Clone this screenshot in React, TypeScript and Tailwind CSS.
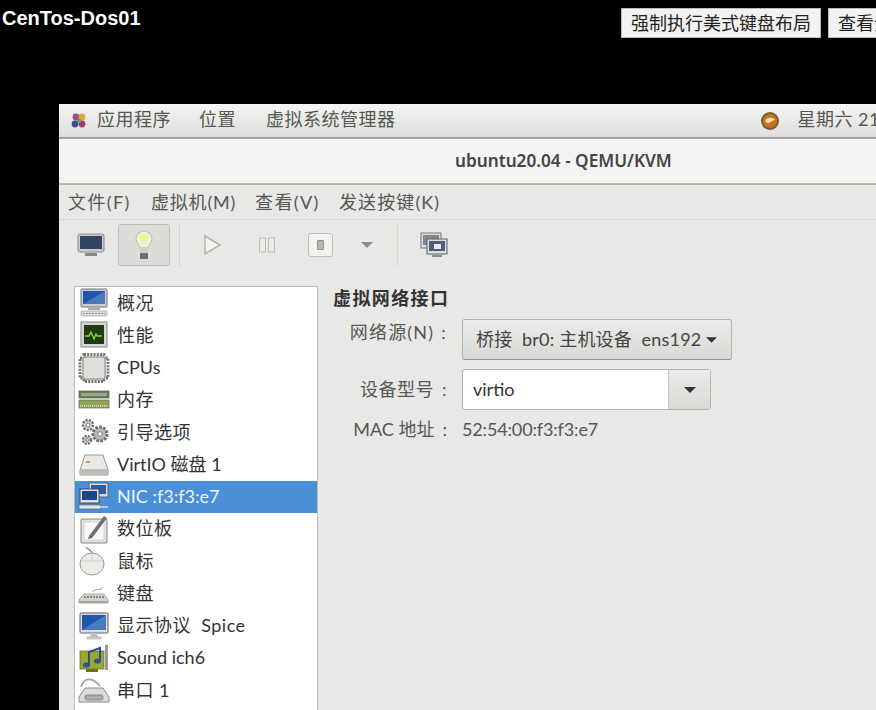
import React from "react";

const Monitor = () => (
  <svg width="32" height="30" viewBox="0 0 32 30">
    <rect x="3" y="1" width="26" height="18" rx="1" fill="#c9ced3" stroke="#6d7378" />
    <rect x="5" y="3" width="22" height="13" fill="#1f56ad" />
    <path d="M5 16 L27 3 V16Z" fill="#6f97c9" opacity=".55" />
    <rect x="10" y="20" width="12" height="2" fill="#a9aca9" />
    <rect x="3" y="23" width="26" height="5" rx="1" fill="#dcdeda" stroke="#9a9d9a" strokeWidth=".7" />
    <path d="M5 25.5h22" stroke="#8f928f" strokeWidth="1" strokeDasharray="2 1" />
  </svg>
);
const Perf = () => (
  <svg width="32" height="30" viewBox="0 0 32 30">
    <rect x="3" y="2" width="26" height="25" fill="#d5d7d3" stroke="#858a85" />
    <rect x="6" y="5" width="20" height="19" fill="#1f3a0f" />
    <path d="M7 16h4l2-4 3 7 2-5 1 2h5" stroke="#8fdc2a" fill="none" strokeWidth="1.3" />
  </svg>
);
const Cpu = () => (
  <svg width="32" height="30" viewBox="0 0 32 30">
    <rect x="2" y="5" width="28" height="20" fill="none" stroke="#747470" strokeWidth="3" strokeDasharray="2 1.2" />
    <rect x="6" y="1.5" width="20" height="27" fill="none" stroke="#747470" strokeWidth="3" strokeDasharray="2 1.2" />
    <rect x="5" y="4" width="22" height="22" rx="2" fill="#dededb" stroke="#8a8a86" />
  </svg>
);
const Ram = () => (
  <svg width="32" height="30" viewBox="0 0 32 30">
    <rect x="1" y="6" width="30" height="7" fill="#6b7d56" stroke="#4d5d3d" strokeWidth=".7" />
    <rect x="3" y="8" width="26" height="3" fill="#9aa58c" />
    <rect x="1" y="15" width="30" height="8" fill="#8fa35e" stroke="#5b6e3a" strokeWidth=".7" />
    <path d="M2 21h28" stroke="#d6d29a" strokeWidth="2" strokeDasharray="1 1" />
  </svg>
);
const Gears = () => (
  <svg width="32" height="30" viewBox="0 0 32 30">
    <circle cx="10" cy="8" r="5" fill="#d9d9d6" stroke="#6f6f68" strokeWidth="2.4" strokeDasharray="2.2 1.2" />
    <circle cx="10" cy="8" r="2" fill="#fff" stroke="#77776f" />
    <circle cx="22" cy="17" r="7" fill="#bdbdb8" stroke="#6f6f68" strokeWidth="3" strokeDasharray="2.6 1.4" />
    <circle cx="22" cy="17" r="2.4" fill="#fff" stroke="#77776f" />
    <circle cx="9" cy="23" r="4" fill="#d9d9d6" stroke="#6f6f68" strokeWidth="2.4" strokeDasharray="2 1.2" />
    <circle cx="9" cy="23" r="1.4" fill="#fff" stroke="#77776f" />
  </svg>
);
const Disk = () => (
  <svg width="32" height="30" viewBox="0 0 32 30">
    <path d="M7 6h18l5 15v5H2v-5Z" fill="#e9e9e6" stroke="#96968f" />
    <rect x="2.5" y="20" width="27" height="6" fill="#bcbcb7" />
    <rect x="8" y="12" width="4" height="2" fill="#e08a5c" />
  </svg>
);
const Nic = () => (
  <svg width="32" height="30" viewBox="0 0 32 30">
    <rect x="11" y="1" width="19" height="14" fill="#d8dde2" stroke="#5b6672" />
    <rect x="13" y="3" width="15" height="9" fill="#2d5da8" />
    <rect x="2" y="7" width="19" height="14" fill="#dfe3e6" stroke="#3f4954" />
    <rect x="4" y="9" width="15" height="9" fill="#1a4690" />
    <rect x="1" y="23" width="22" height="4" fill="#e6e6e2" stroke="#5d6367" strokeWidth=".7" />
    <path d="M23 25h7" stroke="#dfe3e6" strokeWidth="1.5" />
  </svg>
);
const Tablet = () => (
  <svg width="32" height="30" viewBox="0 0 32 30">
    <rect x="3" y="5" width="26" height="24" rx="1" fill="#e3e3e0" stroke="#85857f" />
    <rect x="6" y="8" width="20" height="18" fill="#f8f8f6" stroke="#c4c4c0" strokeWidth=".6" />
    <path d="M11 22 L26 2 L29 4 L14 24 L10 25Z" fill="#6f6f72" />
  </svg>
);
const Mouse = () => (
  <svg width="32" height="30" viewBox="0 0 32 30">
    <path d="M14 7 C13 3 8 3 8 1" fill="none" stroke="#6d8fb8" strokeWidth="1.4" />
    <ellipse cx="14" cy="18" rx="12" ry="11" fill="#ecece9" stroke="#9c9c96" />
    <path d="M14 7v8M3 15h22" stroke="#c6c6c0" strokeWidth=".8" />
  </svg>
);
const Keyboard = () => (
  <svg width="32" height="30" viewBox="0 0 32 30">
    <path d="M14 14 C16 10 24 13 25 9" fill="none" stroke="#a5a5a0" />
    <path d="M6 16h20l4 6v3H1v-3Z" fill="#d4d4d0" stroke="#8d8d87" strokeWidth=".7" />
    <path d="M6 19h20" stroke="#6f6f6a" strokeWidth="1.6" strokeDasharray="2 1" />
    <rect x="1.5" y="23" width="28" height="2" fill="#a3a39d" />
  </svg>
);
const Display = () => (
  <svg width="32" height="30" viewBox="0 0 32 30">
    <rect x="2" y="2" width="28" height="20" rx="1" fill="#dcdfe0" stroke="#5d6368" />
    <rect x="4" y="4" width="24" height="15" fill="#1f57ad" />
    <path d="M4 19 L28 4 V19Z" fill="#6e9ad4" opacity=".55" />
    <path d="M13 22h6l1 4h-8Z" fill="#bfc2c0" />
    <rect x="9" y="26" width="14" height="2" fill="#d5d7d4" stroke="#999" strokeWidth=".5" />
  </svg>
);
const Sound = () => (
  <svg width="32" height="30" viewBox="0 0 32 30">
    <rect x="2" y="8" width="24" height="18" fill="#9aa82d" stroke="#5e681d" strokeWidth=".7" />
    <path d="M11 22 V9 L22 5 V18" fill="none" stroke="#2c4f9c" strokeWidth="2" />
    <ellipse cx="8.5" cy="22" rx="3.5" ry="2.6" fill="#2c4f9c" />
    <ellipse cx="19.5" cy="18" rx="3.5" ry="2.6" fill="#2c4f9c" />
    <rect x="27" y="2" width="3" height="25" fill="#9b9b94" />
    <rect x="8" y="26" width="12" height="3" fill="#6e6e2a" />
  </svg>
);
const Serial = () => (
  <svg width="32" height="30" viewBox="0 0 32 30">
    <path d="M3 12 C6 2 14 2 22 11" fill="none" stroke="#a9a9a4" strokeWidth="2" />
    <path d="M7 13h18l6 9v5H1v-5Z" fill="#dcdcd8" stroke="#8c8c86" />
    <rect x="7" y="20" width="18" height="5" rx="2" fill="#a9adae" stroke="#77797a" strokeWidth=".7" />
  </svg>
);

const sidebar: { icon: React.ReactNode; label: string; active?: boolean; tight?: boolean }[] = [
  { icon: <Monitor />, label: "概况" },
  { icon: <Perf />, label: "性能" },
  { icon: <Cpu />, label: "CPUs", tight: true },
  { icon: <Ram />, label: "内存" },
  { icon: <Gears />, label: "引导选项" },
  { icon: <Disk />, label: "VirtIO 磁盘 1", tight: true },
  { icon: <Nic />, label: "NIC :f3:f3:e7", active: true, tight: true },
  { icon: <Tablet />, label: "数位板" },
  { icon: <Mouse />, label: "鼠标" },
  { icon: <Keyboard />, label: "键盘" },
  { icon: <Display />, label: "显示协议  Spice" },
  { icon: <Sound />, label: "Sound ich6", tight: true },
  { icon: <Serial />, label: "串口 1" },
  { icon: <Serial />, label: "" },
];

const Caret = ({ color = "#2e3436", width = 12 }: { color?: string; width?: number }) => (
  <svg width={width} height="6" viewBox="0 0 12 6" className="shrink-0">
    <path d="M0 0h12L6 6Z" fill={color} />
  </svg>
);

const Divider = () => <div className="mx-[9px] h-[42px] w-px bg-[#d4d4d0]" />;

export default function App() {
  return (
    <div className="flex h-[710px] w-[876px] flex-col overflow-hidden bg-black font-['Lato','Noto_Sans_CJK_SC',sans-serif]">
      {/* page header */}
      <header className="flex h-[104px] shrink-0 items-start">
        <h1 className="ml-[2px] mt-[7px] font-['Liberation_Sans',sans-serif] text-[20px] font-bold leading-[23px] text-white">
          CenTos-Dos01
        </h1>
        <div className="ml-auto mt-[8px] flex w-[255px] shrink-0 gap-[7px] overflow-hidden text-[18px] text-[#222]">
          <button className="h-[30px] shrink-0 whitespace-nowrap border border-[#bbb] bg-[#f2f2f2] px-[9px] leading-[28px]">
            强制执行美式键盘布局
          </button>
          <button className="h-[30px] shrink-0 whitespace-nowrap border border-[#bbb] bg-[#f2f2f2] px-[9px] leading-[28px]">
            查看全屏
          </button>
        </div>
      </header>

      {/* remote desktop */}
      <div className="ml-[59px] flex min-h-0 flex-1 flex-col overflow-hidden bg-[#e8e8e7] text-[18px] tracking-[0.5px] text-[#555753]">
        {/* system top bar */}
        <div className="flex h-[35px] shrink-0 items-center whitespace-nowrap border-b-2 border-[#a4a4a2] bg-linear-to-b from-[#f4f4f3] to-[#dededc] pl-[10px]">
          <svg width="20" height="20" viewBox="0 0 20 20" className="mr-[8px] shrink-0">
            <circle cx="7" cy="6" r="3.4" fill="#9c4a9a" />
            <circle cx="13" cy="6" r="3.4" fill="#e0a83a" />
            <circle cx="6" cy="13" r="3.4" fill="#3c4f96" />
            <circle cx="13" cy="13" r="3.4" fill="#a13d6b" />
            <circle cx="10" cy="10" r="2.2" fill="#7aa13d" />
          </svg>
          <span className="-translate-y-px">应用程序</span>
          <span className="ml-[28px] -translate-y-px">位置</span>
          <span className="ml-[30px] -translate-y-px">虚拟系统管理器</span>
          <svg width="20" height="20" viewBox="0 0 20 20" className="ml-[364px] shrink-0">
            <circle cx="10" cy="10" r="9" fill="#7a5c34" />
            <circle cx="10" cy="10" r="7" fill="#c4761f" />
            <path d="M5 10c2-4 8-4 10-1-3 0-4 3-7 3-1 0-2-1-3-2Z" fill="#f6e2b5" />
          </svg>
          <span className="ml-[18px] shrink-0 -translate-y-px">星期六 21:00</span>
        </div>

        {/* window title */}
        <div className="flex h-[46px] shrink-0 items-center whitespace-nowrap border-b-2 border-[#b8b8b4] bg-[#f4f4f3] pl-[396px] font-['Noto_Sans',sans-serif] text-[17.2px] font-semibold tracking-normal text-[#444]">
          ubuntu20.04 - QEMU/KVM
        </div>

        {/* app menu */}
        <div className="flex h-[35px] shrink-0 items-center whitespace-nowrap border-b border-[#d8d8d6] pl-[9px]">
          <span className="w-[83px] tracking-[1.4px]">文件(F)</span>
          <span className="w-[104px] tracking-[0.8px]">虚拟机(M)</span>
          <span className="w-[84px] tracking-[1.4px]">查看(V)</span>
          <span className="tracking-[1.1px]">发送按键(K)</span>
        </div>

        {/* toolbar */}
        <div className="flex h-[50px] shrink-0 items-center pl-[14px]">
          <div className="flex h-[42px] w-[36px] items-center justify-center">
            <svg width="30" height="28" viewBox="0 0 30 28">
              <rect x="2" y="3" width="26" height="18" rx="2" fill="#c8cbcd" stroke="#85898c" />
              <rect x="4" y="5" width="22" height="13" fill="#2f4560" />
              <rect x="9" y="22" width="12" height="3" fill="#888a85" />
            </svg>
          </div>
          <div className="ml-[9px] flex h-[42px] w-[52px] items-center justify-center rounded-[3px] border border-[#bdbdba] bg-[#dcdcda]">
            <svg width="20" height="30" viewBox="0 0 20 30">
              <path d="M10 1a8 8 0 0 1 8 8c0 4-3 5-4 9H6c-1-4-4-5-4-9a8 8 0 0 1 8-8Z" fill="#f1f1d0" stroke="#bdbdaa" />
              <circle cx="10" cy="8" r="3.4" fill="#f5f58a" />
              <rect x="6" y="18" width="8" height="5" fill="#d0d0c8" />
              <rect x="6" y="23" width="8" height="6" rx="1" fill="#6d6d6a" />
            </svg>
          </div>
          <Divider />
          <div className="flex h-[42px] w-[46px] items-center justify-center">
            <svg width="20" height="22" viewBox="0 0 20 22">
              <path d="M3 2 L18 11 L3 20Z" fill="#f2f2f0" stroke="#b2b2ae" strokeWidth="1.5" />
            </svg>
          </div>
          <div className="ml-[16px] flex h-[42px] w-[32px] items-center justify-center">
            <svg width="18" height="16" viewBox="0 0 18 16">
              <rect x="1.5" y="1" width="6" height="14" fill="#ececea" stroke="#bcbcb8" />
              <rect x="10.5" y="1" width="6" height="14" fill="#ececea" stroke="#bcbcb8" />
            </svg>
          </div>
          <div className="ml-[19px] flex h-[42px] w-[36px] items-center justify-center">
            <div className="flex h-[24px] w-[25px] items-center justify-center rounded-[3px] border border-[#bcbcb8] bg-[#f2f2f0]">
              <div className="h-[10px] w-[7px] rounded-[1px] border border-[#8e8e8a] bg-[#b8b8b4]" />
            </div>
          </div>
          <div className="ml-[16px] flex h-[42px] w-[26px] items-center justify-center">
            <Caret color="#8e8e8a" />
          </div>
          <div className="ml-[8px]"><Divider /></div>
          <div className="ml-[9px] flex h-[42px] w-[36px] items-center justify-center">
            <svg width="30" height="28" viewBox="0 0 30 28">
              <rect x="2" y="2" width="20" height="15" fill="#dcdedf" stroke="#74787b" />
              <rect x="4" y="4" width="16" height="10" fill="#7f8a96" />
              <rect x="8" y="8" width="20" height="15" fill="#dcdedf" stroke="#5c6063" />
              <rect x="10" y="10" width="16" height="10" fill="#4b5f78" />
              <rect x="15" y="13" width="7" height="5" fill="#e8ecef" />
              <rect x="13" y="24" width="10" height="2" fill="#8a8e90" />
            </svg>
          </div>
        </div>

        {/* content */}
        <div className="flex min-h-0 flex-1 pl-[15px] pt-[17px]">
          <ul className="-mt-px w-[244px] shrink-0 self-start border border-[#bcbcb8] bg-white text-[#333]">
            {sidebar.map((item, i) => (
              <li
                key={i}
                className={`flex h-[32.25px] items-center whitespace-pre pl-[3px] ${item.active ? "bg-[#4a90d9] text-[#eef4fb]" : ""} ${item.tight ? "tracking-normal" : ""}`}
              >
                <span className="flex w-[39px] shrink-0">{item.icon}</span>
                <span>{item.label}</span>
              </li>
            ))}
          </ul>

          <section className="ml-[15px] w-[420px] shrink-0 whitespace-nowrap">
            <h2 className="-mt-px h-[33px] text-[18px] font-bold leading-[24px] tracking-[1.4px] text-[#333]">
              虚拟网络接口
            </h2>
            <div className="grid grid-cols-[118px_auto] items-center justify-start gap-x-[11px]">
              <div className="h-[41px] pr-[4px] text-right leading-[27px] tracking-[1.2px]">网络源(N)<span className="ml-[7px]">:</span></div>
              <button className="flex h-[41px] w-[270px] items-center justify-between rounded-[3px] border border-[#b4b4b0] border-b-[#8f8f8b] bg-linear-to-b from-[#ececea] to-[#d8d8d5] pl-[13px] pr-[14px] tracking-[0.2px] text-[#444]">
                <span className="whitespace-pre">桥接  br0: 主机设备  ens192</span>
                <Caret width={11} />
              </button>
              <div className="mt-[9px] h-[41px] pr-[4px] text-right leading-[41px]">设备型号<span className="ml-[8px]">:</span></div>
              <div className="mt-[9px] flex h-[41px] w-[249px] rounded-[3px] border border-[#b4b4b0]">
                <div className="flex-1 rounded-l-[3px] bg-white pl-[10px] leading-[38px] tracking-normal text-[#333]">virtio</div>
                <div className="flex w-[42px] items-center justify-center border-l border-[#c4c4c0] bg-linear-to-b from-[#ececea] to-[#d8d8d5]">
                  <Caret />
                </div>
              </div>
              <div className="mt-[5px] pr-[4px] text-right leading-[28px] tracking-normal">MAC 地址<span className="ml-[8px]">:</span></div>
              <div className="mt-[5px] leading-[28px] tracking-[-0.15px]">52:54:00:f3:f3:e7</div>
            </div>
          </section>
        </div>
      </div>
    </div>
  );
}
